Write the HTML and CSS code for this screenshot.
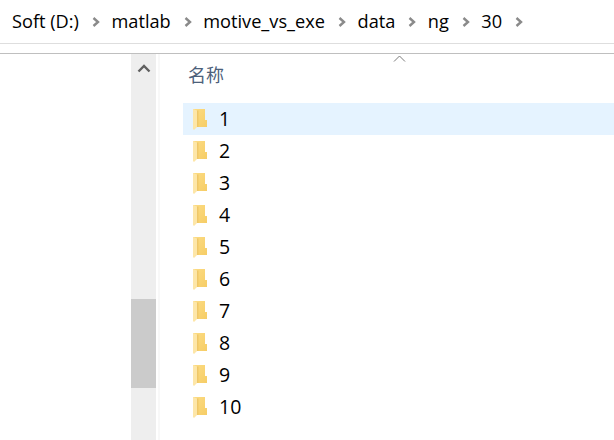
FILE: index.html
```html
<!DOCTYPE html>
<html lang="zh">
<head>
  <meta charset="UTF-8"/>
  <title>30</title>
  <link rel="stylesheet" href="styles.css">
</head>
<body>
  <svg class="defs" width="0" height="0">
    <defs>
      <linearGradient id="fold" x1="0" y1="0" x2="1" y2="1">
        <stop offset="0" stop-color="#fcdc84"/>
        <stop offset="1" stop-color="#f6cd66"/>
      </linearGradient>
      <symbol id="folder" viewBox="0 0 14 21">
        <path d="M0 0H12V11H14V18H0Z" fill="url(#fold)"/>
        <path d="M4 1.6H5.5V18H4Z" fill="#efc768"/>
        <path d="M0 0L4 1.6V18L1 21L0 20Z" fill="#fde6a8"/>
      </symbol>
      <symbol id="sep" viewBox="0 0 8 10">
        <path d="M1.5 1L6 5L1.5 9" fill="none" stroke="#8a8a8a" stroke-width="2.4"/>
      </symbol>
    </defs>
  </svg>

  <!-- address bar -->
  <header class="crumbs">
    <span>Soft (D:)</span><svg class="sep"><use href="#sep"/></svg>
    <span>matlab</span><svg class="sep"><use href="#sep"/></svg>
    <span>motive_vs_exe</span><svg class="sep"><use href="#sep"/></svg>
    <span>data</span><svg class="sep"><use href="#sep"/></svg>
    <span>ng</span><svg class="sep"><use href="#sep"/></svg>
    <span>30</span><svg class="sep"><use href="#sep"/></svg>
  </header>
  <div class="toolbar-gap"></div>

  <div class="main">
    <div class="tree"></div>
    <div class="scrollbar">
      <svg class="scroll-up" width="14" height="9" viewBox="0 0 14 9"><path d="M1.5 7.5L7 2L12.5 7.5" fill="none" stroke="#606060" stroke-width="2.4"/></svg>
      <div class="thumb"></div>
    </div>
    <div class="divider"></div>
    <div class="files">
      <div class="column-head">
        <svg class="sort-arrow" width="13" height="7" viewBox="0 0 13 7"><path d="M1 6.5L6.5 1L12 6.5" fill="none" stroke="#7a7a7a" stroke-width="1"/></svg>
        <span class="column-name">名称</span>
      </div>
      <ul class="file-list">
        <li class="file-row selected"><svg class="folder"><use href="#folder"/></svg>1</li>
        <li class="file-row"><svg class="folder"><use href="#folder"/></svg>2</li>
        <li class="file-row"><svg class="folder"><use href="#folder"/></svg>3</li>
        <li class="file-row"><svg class="folder"><use href="#folder"/></svg>4</li>
        <li class="file-row"><svg class="folder"><use href="#folder"/></svg>5</li>
        <li class="file-row"><svg class="folder"><use href="#folder"/></svg>6</li>
        <li class="file-row"><svg class="folder"><use href="#folder"/></svg>7</li>
        <li class="file-row"><svg class="folder"><use href="#folder"/></svg>8</li>
        <li class="file-row"><svg class="folder"><use href="#folder"/></svg>9</li>
        <li class="file-row"><svg class="folder"><use href="#folder"/></svg>10</li>
      </ul>
    </div>
  </div>
</body>
</html>
```

FILE: styles.css
```css
* { box-sizing: border-box; }
html, body { margin: 0; height: 100%; overflow: hidden; }
body { background: #fff; color: #000; font-family: "Open Sans", "Noto Sans", "Noto Sans CJK SC", sans-serif; font-size: 18.2px; display: flex; flex-direction: column; }
.defs { position: absolute; }
.crumbs { height: 44px; padding: 0 0 2px 12px; display: flex; align-items: center; border-bottom: 1px solid #dedede; }
.sep { width: 8px; height: 10px; margin: 2px 11.5px 0 13px; }
.toolbar-gap { height: 10px; border-bottom: 1px solid #bfbfbf; }
.main { flex: 1; display: flex; min-height: 0; }
.tree { width: 131px; }
.scrollbar { width: 25px; background: #eee; position: relative; padding-top: 10px; display: flex; flex-direction: column; align-items: center; }
.scroll-up { display: block; }
.thumb { position: absolute; top: 245px; left: 0; width: 100%; height: 89px; background: #cbcbcb; }
.divider { width: 2px; margin-left: 2px; background: #f8f8f8; }
.files { flex: 1; padding-left: 23px; }
.column-head { height: 49px; padding: 7px 0 0 5px; position: relative; }
.column-name { color: #4c607a; font-size: 18px; }
.sort-arrow { position: absolute; top: 1px; left: 210px; }
.file-list { list-style: none; margin: 0; padding: 0; }
.file-row { height: 32px; padding-left: 10px; display: flex; align-items: center; line-height: 32px; font-size: 19.5px; }
.file-row.selected { background: #e5f3ff; }
.folder { width: 14px; height: 21px; margin-right: 12px; flex-shrink: 0; }
```
